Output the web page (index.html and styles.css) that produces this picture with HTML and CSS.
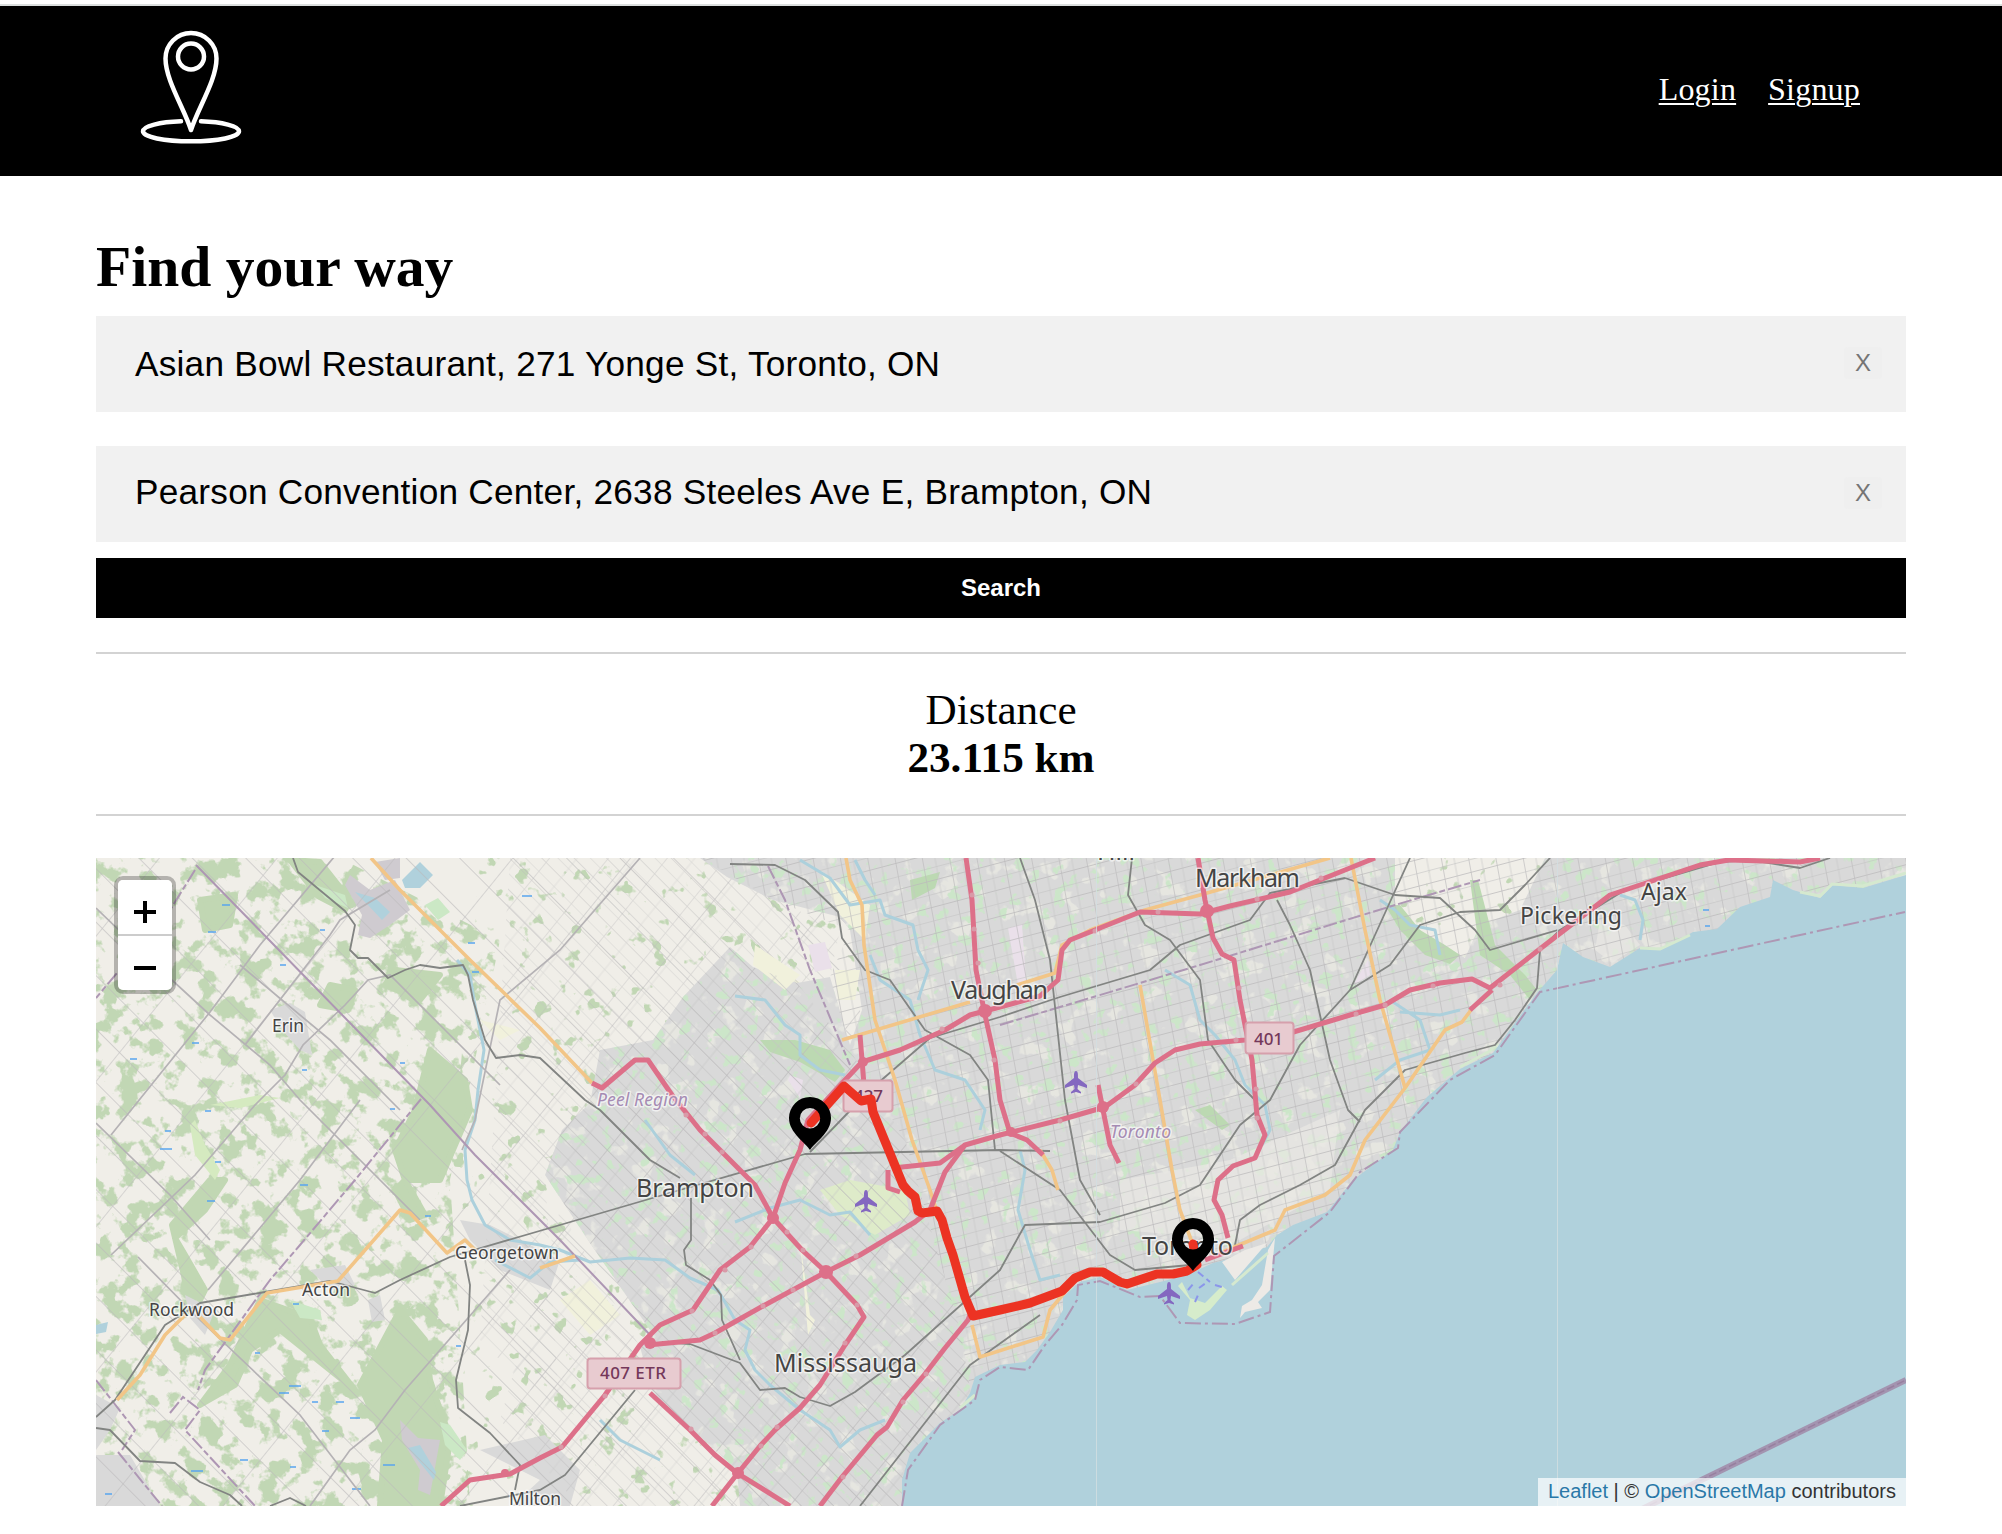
FILE: index.html
```html
<!DOCTYPE html>
<html lang="en">
<head>
<meta charset="utf-8">
<title>Find your way</title>
<link rel="stylesheet" href="styles.css">
</head>
<body>
<header class="header">
  <a class="logo" href="#" aria-label="Home">
    <svg width="104" height="118" viewBox="139 26 104 118" fill="none" stroke="#fff" stroke-width="4.500">
      <path d="M191 130C184 108 165.500 80 165.500 58.500A25.500 25.500 0 0 1 216.500 58.500C216.500 80 198 108 191 130Z" stroke-linejoin="round"/>
      <circle cx="191" cy="56.500" r="13"/>
      <path d="M181 121.300C160 122 143 126 143 131.300C143 137 164 141.300 191 141.300S239 137 239 131.300C239 126 222 122 201 121.300" stroke-linecap="round"/>
    </svg>
  </a>
  <nav class="nav"><a href="#">Login</a><a href="#">Signup</a></nav>
</header>
<main class="main">
  <h1 class="title">Find your way</h1>
  <form class="form">
    <div class="field"><span class="value">Asian Bowl Restaurant, 271 Yonge St, Toronto, ON</span><button class="clear" type="button">X</button></div>
    <div class="field field-to"><span class="value">Pearson Convention Center, 2638 Steeles Ave E, Brampton, ON</span><button class="clear" type="button">X</button></div>
    <button class="search" type="button">Search</button>
  </form>
  <section class="distance"><p>Distance</p><p class="km">23.115 km</p></section>
  <section class="map">
    <svg class="tiles" width="1810" height="648" viewBox="96 858 1810 648">
      <defs>
        <pattern id="peel" width="46" height="23" patternUnits="userSpaceOnUse" patternTransform="matrix(.707 .707 -.63 .777 8 0)">
          <path d="M0 0H46M0 0V23" class="road"/><path d="M0 12H46M22 0V23" class="street"/>
        </pattern>
        <pattern id="rural" width="92" height="38" patternUnits="userSpaceOnUse" patternTransform="matrix(.707 .707 -.63 .777 30 0)">
          <path d="M0 0H92M0 0V38" class="road"/>
        </pattern>
        <pattern id="york" width="27" height="26" patternUnits="userSpaceOnUse" patternTransform="matrix(.965 -.255 .18 .984 0 0)">
          <path d="M0 0H27M0 0V26" class="road"/><path d="M0 14H27M13 0V26" class="street"/>
        </pattern>
        <filter id="forest" x="0" y="0" width="1" height="1" color-interpolation-filters="sRGB">
          <feTurbulence type="fractalNoise" baseFrequency=".05" numOctaves="4" seed="7"/>
          <feColorMatrix values="0 0 0 0 .757 0 0 0 0 .843 0 0 0 0 .706 12 0 0 0 -6.200"/>
          <feComposite in2="SourceGraphic" operator="in"/>
        </filter>
        <filter id="copse" x="0" y="0" width="1" height="1" color-interpolation-filters="sRGB">
          <feTurbulence type="fractalNoise" baseFrequency=".06" numOctaves="3" seed="12"/>
          <feColorMatrix values="0 0 0 0 .757 0 0 0 0 .843 0 0 0 0 .706 16 0 0 0 -10.600"/>
          <feComposite in2="SourceGraphic" operator="in"/>
        </filter>
        <filter id="parks" x="0" y="0" width="1" height="1" color-interpolation-filters="sRGB">
          <feTurbulence type="fractalNoise" baseFrequency=".075" numOctaves="3" seed="4"/>
          <feColorMatrix values="0 0 0 0 .8 0 0 0 0 .9 0 0 0 0 .79 12 0 0 0 -7.300"/>
          <feComposite in2="SourceGraphic" operator="in"/>
        </filter>
        <filter id="pale" x="0" y="0" width="1" height="1" color-interpolation-filters="sRGB">
          <feTurbulence type="fractalNoise" baseFrequency=".05" numOctaves="3" seed="21"/>
          <feColorMatrix values="0 0 0 0 .9 0 0 0 0 .9 0 0 0 0 .88 12 0 0 0 -7.200"/>
          <feComposite in2="SourceGraphic" operator="in"/>
        </filter>
        <path id="city" d="M740 1506L737 1470 653 1393 640 1347 650 1330 590 1243 545 1175 562 1130 590 1103 600 1050 653 1040 683 997 730 947 753 967 797 983 830 977 850 1045 862 1010 850 930 840 917 773 900 727 877 700 858H1906V1100L1300 1506Z"/>
        <path id="cityWest" d="M740 1506L737 1470 653 1393 640 1347 650 1330 590 1243 545 1175 562 1130 590 1103 600 1050 653 1040 683 997 730 947 753 967 797 983 850 1050 905 1140 960 1330 990 1506Z"/>
        <path id="cityEast" d="M700 858H1906V1100L1300 1506H990L960 1330 905 1140 850 1050 830 977 850 930 773 900Z"/>
        <path id="plane" d="M0 -11C2 -11 2 -8 2 -4L11 3V6L2 3 1.500 7 5 10V11.500L0 10 -5 11.500V10L-1.500 7 -2 3 -11 6V3L-2 -4C-2 -8 -2 -11 0 -11Z" fill="#8468c0"/>
        <path id="pin" fill-rule="evenodd" d="M0 0C-4 -7 -21 -17 -21 -32A21 21 0 0 1 21 -32C21 -17 4 -7 0 0ZM0 -42A10.200 10.200 0 1 0 0 -21.600A10.200 10.200 0 1 0 0 -42Z"/>
      </defs>

      <rect x="96" y="858" width="1810" height="648" fill="#f0eee8"/>

      <!-- countryside -->
      <path filter="url(#copse)" d="M480 858H860V1506H420Z"/>
      <path filter="url(#forest)" d="M96 858H340L500 940 475 1060 450 1180 460 1330 470 1506H96Z"/>
      <g class="wood">
        <path d="M290 860L320 862 350 900 345 910 318 896Z"/>
        <path d="M430 1050L465 1080 470 1110 455 1145 440 1180 405 1180 395 1150 415 1110Z"/>
        <path d="M400 1310L425 1340 430 1380 450 1440 440 1506H380L385 1440 360 1385Z"/>
        <path d="M405 1180L425 1215 410 1220 395 1190Z"/>
        <path d="M260 1300L310 1318 320 1345 355 1390 330 1370 280 1330 250 1350 235 1385 200 1405 230 1365Z"/>
        <path d="M175 1238L205 1210 225 1180 210 1180 172 1225 185 1280 200 1300 205 1290 185 1255Z"/>
        <path d="M330 985L355 990 348 1010 320 1005ZM395 970L440 975 420 1000 385 985ZM200 900L235 895 230 925 205 930Z"/>
      </g>
      <g fill="#cbe8c5"><path d="M315 885L345 895 348 908 325 898ZM425 905L438 898 450 912 438 920ZM440 1422L450 1425 467 1450 460 1460 445 1445ZM290 1300L320 1310 322 1320 300 1318Z"/></g>
      <g fill="#d5eac0"><path d="M195 1120L205 1145 220 1170 215 1180 195 1155 190 1125ZM210 1105L260 1095 280 1098 240 1108Z"/></g>
      <g fill="#cfcbd0"><path d="M350 875L370 890 395 880 410 910 390 925 370 938 358 935 362 915 345 885ZM375 862L400 858 400 878 385 880ZM400 1420L418 1438 440 1440 430 1495 418 1490 420 1470 402 1440Z"/></g>
      <g fill="#b0d1dc"><path d="M355 892L375 898 390 912 382 920 368 905ZM402 880L420 862 433 875 420 888 405 888ZM408 1448L420 1445 436 1472 434 1480ZM96 1325L108 1322 106 1332 96 1334Z"/></g>
      <g fill="#d9d9d9">
        <path d="M96 1395L120 1408 110 1430 96 1450ZM96 1455L130 1455 160 1506H96ZM185 1295L215 1310 205 1335 190 1318ZM310 1270L345 1265 355 1285 330 1290ZM368 1300L380 1295 385 1320 372 1322ZM270 1010L290 1003 305 1012 312 1055 300 1050 282 1030ZM480 1450L545 1435 580 1470 570 1506H512L540 1480Z"/>
        <path d="M460 1220L490 1225 560 1260 550 1290 500 1270 470 1240Z"/>
      </g>
      <g fill="#f1f1dc"><path d="M560 1300L590 1280 620 1315 590 1335ZM755 957L800 982 785 990 755 962ZM480 1020L520 1030 500 1040ZM690 1000L705 1008 695 1018Z"/></g>
      <path d="M96 858H860V1506H96Z" fill="url(#rural)" opacity=".8"/>
      <path d="M510 858L700 858 727 877 840 930 830 977 797 983 730 947 653 1040 600 1050 590 1103 545 1175 560 1420 480 1340Z" fill="url(#peel)" opacity=".55"/>
      <path d="M560 1210L640 1347 737 1470 740 1506H580L500 1420Z" fill="url(#peel)" opacity=".6"/>

      <!-- built-up area -->
      <use href="#city" fill="#d9d9d9"/>
      <use href="#city" filter="url(#pale)"/>
      <use href="#city" filter="url(#parks)"/>
      <path d="M1395 858H1545L1520 910 1480 925 1465 958 1425 935 1395 905Z" fill="#f0eee8"/>
      <path d="M1395 858H1545L1520 910 1480 925 1465 958 1425 935 1395 905Z" filter="url(#copse)"/>
      <path d="M1120 1180L1230 1160 1340 1110 1330 1190 1240 1240 1120 1230ZM1600 920L1625 925 1640 945 1612 963 1595 950Z" fill="#eae8e4" opacity=".7"/>
      <path d="M820 870L870 905 865 940 840 915ZM755 945L800 975 785 990 753 965ZM835 970L860 970 855 1000 838 1000ZM800 1240L810 1315 815 1320 808 1335Z" fill="#f1f1dc"/>
      <path d="M808 945L825 942 832 968 815 972ZM1008 928L1022 924 1026 980 1018 985ZM790 1075L803 1080 800 1098 788 1080ZM1353 985L1368 960 1370 975Z" fill="#eae0ea"/>
      <path d="M820 1190L850 1180 905 1190 910 1215 875 1235 840 1215Z" fill="#deebc9"/>
      <path d="M760 1040L795 1040 830 1050 845 1070 835 1082 800 1062 770 1052ZM910 880L940 872 935 888 912 900ZM1195 1110L1210 1105 1230 1125 1222 1130ZM1385 905L1400 905 1420 930 1445 945 1460 955 1450 964 1425 955 1400 930ZM1470 880L1478 880 1495 945 1525 975 1537 990 1530 1000 1510 975 1480 955Z" fill="#bcd9b2"/>
      <use href="#cityWest" fill="url(#peel)"/>
      <use href="#cityEast" fill="url(#york)"/>

      <!-- lake -->
      <path fill="#b0d1dc" d="M902 1506L902 1480 910 1453 940 1423 960 1410 970 1393 975 1377 1000 1365 1025 1362 1037 1350 1050 1332 1063 1310 1063 1297 1080 1282 1100 1277 1127 1290 1160 1282 1187 1275 1213 1263 1233 1258 1267 1247 1277 1235 1293 1225 1327 1212 1353 1180 1393 1150 1400 1132 1427 1097 1460 1069 1493 1053 1517 1020 1537 993 1557 970 1563 943 1583 957 1610 967 1640 948 1660 950 1693 932 1717 929 1740 907 1770 897 1773 880 1793 890 1820 898 1833 885 1863 888 1906 875V1506Z"/>
      <path fill="#d6eccb" d="M1178 1286L1190 1300 1187 1315 1195 1320 1210 1310 1227 1290 1222 1286 1205 1303 1190 1298 1182 1282Z"/>
      <path fill="#edeae6" d="M1242 1306L1252 1300 1262 1285 1268 1250 1275 1238 1270 1290 1258 1302 1262 1308 1245 1312 1240 1318ZM1222 1262L1245 1250 1267 1243 1235 1280Z"/>
      <path fill="none" stroke="#d5e9cf" stroke-width="3" d="M1232 1285L1268 1253M1640 948L1660 949 1690 935M1800 892L1820 896 1832 884 1863 886 1906 873M1460 1067L1490 1051 1498 1043M960 1408L975 1395"/>
      <path fill="none" stroke="#8b96ea" stroke-width="2" stroke-dasharray="7 4" d="M1198 1272L1210 1282M1188 1290L1194 1283M1199 1288L1206 1283M1215 1285L1222 1287M1195 1302L1198 1295"/>

      <!-- rivers -->
      <g class="river">
        <path d="M457 960L470 975 474 1000 484 1050 478 1090 475 1120 465 1150 467 1180 472 1200 485 1225 510 1240 540 1245 560 1250 590 1262 630 1258 665 1260 690 1278 718 1290 735 1320 750 1330 745 1350 755 1370 770 1385 800 1410 830 1430 840 1447 860 1430 885 1420"/>
        <path d="M495 1260L530 1278 550 1262 580 1260M800 860L830 878 850 905 880 900 885 915 913 925 918 950 928 970 918 1000"/>
        <path d="M735 996L765 1000 785 1025 800 1035 800 1055 820 1070 845 1075M855 860L865 880 875 895M870 955L880 980 910 1000 920 1035 935 1070 965 1080 985 1110 980 1130"/>
        <path d="M735 1222L770 1208 800 1200 830 1215 850 1212 870 1235M645 1120L670 1155 695 1175M600 1420L620 1440 660 1460M1020 1150L1025 1170 1018 1210 1030 1250 1040 1280 1060 1275"/>
        <path d="M1165 970L1190 985 1200 1020 1215 1035 1235 1060 1245 1085 1265 1105 1270 1130 1262 1145M1380 900L1395 910 1410 925 1435 930 1440 955M1390 1000L1420 1020 1430 1050 1400 1060 1375 1080M1400 1012L1440 1015 1460 1010M1620 895L1635 900 1643 920 1640 940"/>
      </g>
      <path class="pond" d="M222 905h8M208 932h8M280 965h6M192 1043h7M130 1059h7M302 1070h5M160 1149h12M215 1162h6M205 1111h6M320 930h5M522 896h10M468 943h7M472 972h7M400 1063h5M390 1109h5M207 1201h8M300 1185h8M293 1304h6M289 1386h12M279 1393h10M336 1402h8M312 1402h6M350 1418h10M240 1460h8M191 1471h12M322 1431h7M290 1467h6M383 1465h12M352 1489h9M105 1494h7M165 1131h6M255 1353h5M425 1216h6M456 1346h5M1703 910h6M1705 926h5"/>

      <!-- country roads -->
      <g class="lane">
        <path d="M111 1135L210 1012 260 945 340 850M96 908L150 960 210 1015 270 1065 300 1100 330 1130 420 1220M96 1123L170 1195 210 1240M240 965L330 1040 400 1110M390 890L340 920 330 935 245 1045M111 1255L195 1175 255 1105 285 1075 303 1045 345 1005 368 980 390 975 440 1025 500 1085M138 1257L200 1320 300 1415 370 1506M208 1290L300 1180 360 1100M310 1506L350 1450 375 1430 405 1390 440 1350 510 1270M640 858L560 950 500 1000 475 1120 462 1150"/>
      </g>
      <!-- boundaries -->
      <g class="border">
        <path d="M196 865L430 1105 475 1155 560 1240 652 1337"/>
        <path d="M421 1099L355 1180 300 1245 270 1280 205 1370 198 1390M195 870L170 910 96 998M768 866L785 900 810 970 850 1065" stroke-dasharray="14 3 6 3"/>
        <path d="M96 1380L135 1430 122 1450M170 1413L183 1397 200 1410 185 1430 255 1506M118 1452L162 1506M1000 1025L1200 965 1395 905 1480 880" stroke-dasharray="14 3 6 3"/>
        <path d="M902 1506L908 1470 940 1425 975 1400 980 1380 1000 1367 1028 1370 1045 1345 1062 1325 1077 1300 1078 1285 1100 1281 1140 1297 1160 1296 1180 1323 1235 1324 1270 1312 1274 1256 1330 1212 1360 1172 1398 1148 1400 1132 1450 1080 1495 1055 1520 1020 1540 992 1905 912" stroke-dasharray="16 4 3 4"/>
      </g>
      <path d="M1640 1510L1906 1380" stroke="#a394b0" stroke-width="6"/><path d="M1640 1510L1906 1380" stroke="#977f9f" stroke-width="1.500" stroke-dasharray="8 3"/>

      <!-- railways -->
      <g class="rail">
        <path d="M293 858L298 872 345 911 355 925 350 950 358 958 368 958 388 978 405 970 420 965 440 968 463 965 468 975 473 1000 485 1040 496 1058 520 1055 540 1058 585 1100 600 1110 650 1160 680 1178"/>
        <path d="M96 1417L115 1400 165 1325 200 1303 265 1292 330 1281 375 1293 400 1280 450 1257 560 1225 680 1190 805 1154 1000 1150 1050 1151M465 1260L470 1285 468 1330 456 1380 458 1408 490 1433 520 1465 515 1490M96 1428L110 1430 140 1461 175 1463 200 1482 230 1495 242 1506M270 1506L290 1498 306 1506M635 1390L565 1475 540 1490 460 1506"/>
        <path d="M860 1506L970 1365 1040 1315M730 864L775 865 805 880 838 912 842 938 865 970 890 980 925 1030 970 1055 988 1080 995 1150M810 1152L870 1090 930 1038 1000 1017 1060 997 1150 970 1180 945 1250 920 1270 893 1345 878M662 1342L690 1344 740 1363 760 1390 785 1388 800 1397 830 1406 855 1392 905 1355 1000 1270 1025 1225 1100 1222 1165 1203 1200 1185 1240 1125 1270 1100 1300 1045 1350 990 1375 935 1410 858M1020 858L1035 900 1050 960 1065 1100 1080 1180 1100 1215"/>
        <path d="M1132 858L1128 895 1145 925 1170 940 1200 980 1208 1040 1235 1080 1255 1100M1277 900L1290 925 1310 970 1330 1060 1348 1110 1360 1122M1000 1151L1060 1190 1110 1255 1135 1270 1190 1265M1235 1245L1240 1220 1260 1205 1300 1185 1335 1165 1365 1110 1405 1070 1465 1053 1495 1045 1515 1020 1537 988 1540 950 1560 930 1625 890 1720 862 1750 860 1800 868 1830 858M1345 878L1395 895 1440 898 1475 930 1490 950 1558 930M1350 990L1390 965 1420 925 1460 912 1500 910 1525 885 1550 858"/>
        <path d="M691 1198V1240L684 1250 686 1265 710 1280 721 1295 722 1320 740 1360"/>
      </g>

      <!-- primary roads -->
      <g class="primary">
        <path d="M371 858L400 890 470 960 540 1028 592 1083M117 1400L140 1375 165 1335 185 1315M200 1317L220 1338 230 1340 267 1293 338 1281 400 1210 410 1213 447 1253 465 1240 475 1250M540 1268L575 1256"/>
        <path d="M846 858L850 880 862 905 864 945 875 1020 895 1080 912 1140 930 1190 938 1215M842 1040L970 1002M1017 985L1055 973 1062 945 1090 930 1145 910 1200 895 1330 858M1140 985L1160 1100 1172 1170 1180 1210 1193 1245M1351 858L1365 930 1380 1000 1400 1070 1405 1088M972 1325L980 1357 1043 1337 1050 1310 1065 1292M1040 1150L1052 1170 1058 1190M1220 1253L1275 1230 1285 1210 1325 1195 1350 1175 1365 1140 1405 1088 1445 1030 1462 1022 1471 1010"/>
      </g>

      <!-- motorways -->
      <g class="motorway">
        <path d="M441 1506L470 1480 510 1474 540 1458 562 1447 605 1395 640 1345 660 1325 693 1310 720 1270 750 1247 773 1218 785 1183 800 1150 808 1120 845 1080 862 1062 900 1050 945 1030 970 1015 1000 1007 1040 996 1058 980 1062 950 1070 940 1095 930 1140 912 1200 914 1230 906 1290 892 1345 870 1375 858"/>
        <path d="M592 1083L602 1088 635 1060 648 1060 672 1095 700 1130 725 1155 755 1185 773 1218 802 1250 826 1272 857 1305 864 1317 845 1345 820 1385 800 1408 775 1430 760 1446 738 1473 712 1506"/>
        <path d="M648 1345L700 1340 715 1333 763 1306 826 1272 860 1255 915 1222 930 1210 945 1172 965 1145 1000 1135 1060 1120 1105 1107 1135 1085 1155 1063 1175 1050 1200 1044 1245 1040 1290 1033 1350 1015 1385 1005 1410 990 1440 983 1472 979 1490 988 1545 945 1610 895 1700 865 1740 858M1730 860L1800 862 1820 858"/>
        <path d="M650 1393L690 1430 715 1455 737 1473 790 1506M820 1506L842 1477 877 1435 887 1427 903 1400 925 1374 945 1348 968 1320 972 1310M860 1035L864 1085M966 858L972 900 976 970 985 1015 995 1060 1000 1100 1010 1133 1027 1140 1043 1155M1198 858L1205 900 1213 938 1222 954 1234 960 1240 1000 1245 1025 1252 1060 1257 1115 1265 1135 1255 1158 1233 1166 1218 1180 1214 1200 1222 1215 1228 1238M1098 1085L1103 1110 1110 1145 1119 1163M1205 1260L1243 1246M893 1168L940 1163 965 1145M888 1170L888 1188 900 1192M1470 1010L1492 990"/>
      </g>
      <g class="junction">
        <circle cx="773" cy="1218" r="6"/><circle cx="826" cy="1272" r="7"/><circle cx="650" cy="1343" r="6"/><circle cx="738" cy="1473" r="6"/><circle cx="985" cy="1011" r="7"/><circle cx="1207" cy="911" r="7"/><circle cx="1103" cy="1107" r="6"/><circle cx="1011" cy="1132" r="5"/><circle cx="863" cy="1062" r="5"/><circle cx="505" cy="1473" r="4"/>
      </g>
      <path class="exits" d="M725 1270h.1M692 1311h.1M751 1247h.1M715 1333h.1M763 1306h.1M793 1290h.1M856 1256h.1M857 1305h.1M845 1343h.1M777 1427h.1M761 1446h.1M843 1477h.1M903 1402h.1M926 1374h.1M561 1447h.1M605 1396h.1M691 1429h.1M686 1115h.1M705 1134h.1M722 1152h.1M787 1232h.1M803 1250h.1M972 895h.1M974 929h.1M978 963h.1M994 1060h.1M1060 1121h.1M1136 1084h.1M1236 1040h.1M1239 988h.1M1256 1089h.1M1257 1118h.1M1095 931h.1M1158 912h.1M1257 899h.1M1321 878h.1M1356 1014h.1M1385 1005h.1M1433 986h.1M1500 985h.1M1540 949h.1M942 1029h.1"/>

      <path d="M1096.500 858V1506M1557.500 858V1506" stroke="#d4dfe2" stroke-width="1" opacity=".8"/>
      <use href="#plane" x="866" y="1201"/><use href="#plane" x="1076" y="1082"/><use href="#plane" x="1169" y="1293"/>

      <g class="shield">
        <rect x="587.500" y="1358.500" width="93" height="30" rx="3"/><rect x="843.500" y="1080.500" width="49" height="31" rx="3"/><rect x="1245.500" y="1022.500" width="48" height="31" rx="3"/>
        <text x="600" y="1379" textLength="66">407 ETR</text><text x="854" y="1102" textLength="29">427</text><text x="1254" y="1045" textLength="29">401</text>
      </g>
      <g class="place town">
        <text x="272" y="1032" textLength="32">Erin</text><text x="149" y="1316" textLength="85">Rockwood</text><text x="302" y="1296" textLength="48">Acton</text><text x="455" y="1259" textLength="104">Georgetown</text><text x="509" y="1505" textLength="52">Milton</text>
      </g>
      <g class="place large">
        <text x="1520" y="924" textLength="102">Pickering</text><text x="1641" y="900" textLength="46">Ajax</text>
      </g>
      <g class="place cityname">
        <text x="636" y="1197" textLength="118">Brampton</text><text x="774" y="1372" textLength="143">Mississauga</text><text x="951" y="999" textLength="97">Vaughan</text><text x="1195" y="887" textLength="105">Markham</text><text x="1142" y="1255" textLength="91">Toronto</text><text x="1097" y="860">Hill</text>
      </g>
      <g class="place region">
        <text x="597" y="1106" textLength="91">Peel Region</text><text x="1110" y="1138" textLength="61">Toronto</text>
      </g>

      <path class="route" d="M811 1123L844 1086 861 1101 871 1099 873 1112 903 1185 908 1191 915 1197 918 1211 922 1213 930 1212 937 1211 942 1220 947 1238 953 1255 965 1297 973 1316 1000 1310 1030 1303 1062 1291 1075 1278 1090 1272 1103 1272 1120 1282 1127 1284 1157 1274 1173 1274 1187 1271 1197 1265 1193 1244"/>
      <use href="#pin" x="810" y="1150"/><use href="#pin" x="1193" y="1271"/>
    </svg>
    <div class="zoom"><a href="#" aria-label="Zoom in"><svg width="22" height="22"><path d="M0 11H22M11 0V22" stroke="#000" stroke-width="4"/></svg></a><a href="#" aria-label="Zoom out"><svg width="22" height="22"><path d="M0 11H22" stroke="#000" stroke-width="4"/></svg></a></div>
    <div class="credit"><a href="#">Leaflet</a> | © <a href="#">OpenStreetMap</a> contributors</div>
  </section>
</main>
</body>
</html>
```
FILE: styles.css
```css
* { box-sizing: border-box; margin: 0; padding: 0; }
body { background: #fff; color: #000; font-family: "Liberation Serif", serif; padding-top: 4px; height: 1534px; overflow: hidden; }
.header { height: 172px; background: #000; border-top: 2px solid #dbdfde; padding: 0 142px 0 139px; display: flex; justify-content: space-between; align-items: flex-start; }
.logo { display: block; margin-top: 20px; }
.logo svg { display: block; }
.nav { display: flex; gap: 32px; margin-top: 65px; }
.nav a { color: #fff; font-size: 32px; line-height: 37px; letter-spacing: .2px; text-underline-offset: 3px; text-decoration-thickness: 2px; }
.main { padding: 58px 96px 0; }
.title { font-size: 57.6px; line-height: 66px; margin-bottom: 16px; }
.form { display: flex; flex-direction: column; }
.field { height: 96px; background: #f1f1f1; padding: 0 24px 0 39px; display: flex; align-items: center; justify-content: space-between; font-family: "Liberation Sans", sans-serif; }
.field-to { margin-top: 34px; }
.value { font-size: 35.2px; letter-spacing: .245px; }
.field-to .value { margin-top: -4px; }
.clear { width: 38px; height: 32px; margin-top: -2px; border: 0; border-radius: 4px; background: #efefef; color: #757575; font: 24px/32px "Liberation Sans", sans-serif; }
.search { height: 60px; margin-top: 16px; border: 0; background: #000; color: #fff; font: bold 24px "Liberation Sans", sans-serif; }
.distance { margin-top: 34px; height: 164px; border-top: 2px solid #d3d3d3; border-bottom: 2px solid #d3d3d3; padding-top: 32px; text-align: center; font-size: 43.2px; line-height: 48px; }
.km { font-weight: bold; }
.map { position: relative; margin-top: 42px; height: 648px; overflow: hidden; font-family: "Liberation Sans", sans-serif; }
.tiles { display: block; }
.road { fill: none; stroke: #bcbabc; stroke-width: 1.3; }
.street { fill: none; stroke: #c4c3c4; stroke-width: .6; }
.lane { fill: none; stroke: #b5b2b5; stroke-width: 1.7; }
.wood { fill: #c1d7b3; stroke: #c1d7b3; stroke-width: 6; stroke-linejoin: round; }
.river { fill: none; stroke: #acd0dc; stroke-width: 3; stroke-linejoin: round; }
.pond { stroke: #58a5ee; stroke-width: 1.6; }
.border { fill: none; stroke: #ae97b4; stroke-width: 2; }
.rail { fill: none; stroke: #828482; stroke-width: 1.8; stroke-linejoin: round; }
.primary { fill: none; stroke: #f2c587; stroke-width: 3.6; stroke-linejoin: round; }
.motorway { fill: none; stroke: #dd7089; stroke-width: 5; stroke-linejoin: round; }
.junction { fill: #dd7089; }
.exits { stroke: #d99aa8; stroke-width: 5; stroke-linecap: round; }
.shield rect { fill: #e8cbd0; stroke: #d6a0ac; stroke-width: 2; }
.shield text { font: 500 17px "Noto Sans", sans-serif; fill: #74385a; }
.place { font-family: "Noto Sans", sans-serif; fill: #444; stroke: rgba(255, 255, 255, .65); stroke-width: 3; paint-order: stroke; stroke-linejoin: round; }
.town { font-size: 17.5px; }
.large { font-size: 23px; }
.cityname { font-size: 25px; }
.region { font-size: 17.5px; font-style: italic; fill: #a58bb3; }
.route { fill: none; stroke: #ec3323; stroke-width: 9; stroke-linecap: round; stroke-linejoin: round; }
.zoom { position: absolute; left: 18px; top: 18px; width: 62px; height: 118px; border: 4px solid rgba(0, 0, 0, .25); border-radius: 9px; background-clip: padding-box; overflow: hidden; }
.zoom a { display: flex; height: 54px; align-items: center; justify-content: center; background: #fff; padding-top: 9px; }
.zoom a:first-child { border-bottom: 2px solid #ccc; height: 56px; padding-top: 10px; }
.credit { position: absolute; right: 0; bottom: 0; height: 28px; width: 368px; padding: 0 10px; background: rgba(255, 255, 255, .7); color: #333; font-size: 20px; line-height: 27px; white-space: nowrap; }
.credit a { color: #2a78a8; text-decoration: none; }
```
